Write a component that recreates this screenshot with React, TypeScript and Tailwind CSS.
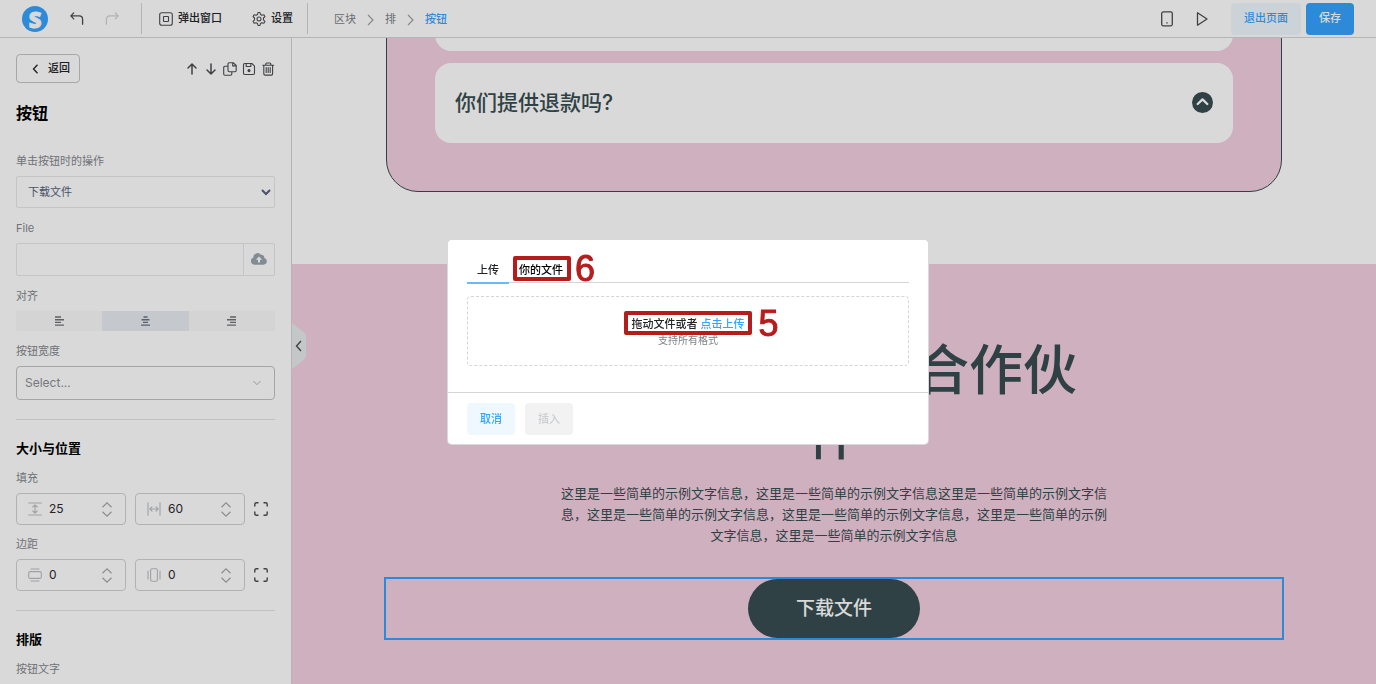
import React from 'react';
import { clsx } from 'clsx';

type IconProps = { className?: string; children: React.ReactNode; size?: number };

const Icon = ({ className, children, size = 14 }: IconProps) => (
  <svg
    width={size}
    height={size}
    viewBox={`0 0 ${size} ${size}`}
    fill="none"
    stroke="currentColor"
    strokeWidth={1.1}
    strokeLinecap="round"
    strokeLinejoin="round"
    className={clsx('shrink-0', className)}
    aria-hidden="true"
  >
    {children}
  </svg>
);

const ChevronRight = () => (
  <svg width="7" height="12" viewBox="0 0 7 12" fill="none" stroke="currentColor" strokeWidth="1.2" className="shrink-0 text-[#a0a2a5]">
    <path d="M1 1l5 5-5 5" />
  </svg>
);

const Header = () => (
  <header className="flex h-[38px] shrink-0 items-center border-b border-[#d4d5d6] bg-white text-[11px] font-medium text-[#222427]">
    <a href="#" className="ml-[22px] flex size-[26px] items-center justify-center rounded-full bg-[#36a3ff] font-['Open_Sans',sans-serif] text-[22px] leading-none font-extrabold text-white [-webkit-text-stroke:1px_white]">
      S
    </a>
    <button aria-label="撤销" className="ml-[22px] text-[#4b4d50]">
      <Icon><path strokeWidth="1.300" d="M3.700 0.900L0.900 3.900l2.800 3M0.900 3.900h8.300c2 0 3.400 1.500 3.400 3.500v4.800" /></Icon>
    </button>
    <button aria-label="重做" className="ml-[21px] text-[#d0d2d4]">
      <Icon><path strokeWidth="1.300" d="M10.300 0.900l2.800 3-2.800 3M13.100 3.900H4.800c-2 0-3.400 1.500-3.400 3.500v4.800" /></Icon>
    </button>
    <div className="ml-[22px] h-[31px] w-px bg-[#d4d5d6]" />
    <button className="ml-[17px] flex items-center gap-[5px]">
      <Icon className="text-[#4b4d50]">
        <rect x="0.700" y="0.700" width="12.600" height="12.600" rx="2" />
        <rect x="4.500" y="4.500" width="5" height="5" rx="0.500" />
      </Icon>
      弹出窗口
    </button>
    <button className="ml-[30px] flex items-center gap-[5px]">
      <svg width="14" height="14" viewBox="1.500 1.500 21 21" fill="none" stroke="currentColor" strokeWidth="1.600" strokeLinejoin="round" className="text-[#4b4d50]">
        <path d="M9.700 5.300L10.500 2.300h3l.8 3 2 1.100 3-.8 1.600 2.700-2.200 2.200v2.900l2.200 2.200-1.600 2.700-3-.8-2 1.200-.8 3h-3l-.8-3-2-1.200-3 .8-1.600-2.700 2.200-2.200v-2.900L3.100 8.300l1.600-2.700 3 .8z" />
        <circle cx="12" cy="12" r="3" />
      </svg>
      设置
    </button>
    <div className="ml-[14px] h-[31px] w-px bg-[#d4d5d6]" />
    <nav className="ml-[26px] flex items-center gap-[11px] pt-[2px] font-normal text-[#7d8085]">
      <a href="#">区块</a>
      <ChevronRight />
      <a href="#">排</a>
      <ChevronRight />
      <a href="#" className="font-medium text-[#36a3ff]">按钮</a>
    </nav>
    <div className="mr-[22px] ml-auto flex items-center">
      <button aria-label="手机" className="mr-[22px] text-[#4b4d50]">
        <svg width="12" height="16" viewBox="0 0 12 16" fill="none" stroke="currentColor" strokeWidth="1.300">
          <rect x="0.700" y="0.900" width="10.600" height="13.900" rx="1.500" />
          <path d="M5.300 11.800h1.400" />
        </svg>
      </button>
      <button aria-label="预览" className="mr-[22px] text-[#4b4d50]">
        <Icon><path strokeWidth="1.300" d="M2.500 0.800v12.400l9.500-6.200z" /></Icon>
      </button>
      <button className="h-8 rounded-[4px] bg-[#eff8ff] px-[13px] text-[#36a3ff]">退出页面</button>
      <button className="ml-[5px] h-8 rounded-[4px] bg-[#36a3ff] px-[13px] text-white">保存</button>
    </div>
  </header>
);

const Label = ({ htmlFor, children }: { htmlFor?: string; children: React.ReactNode }) => (
  <label htmlFor={htmlFor} className="mb-[7px] block text-[11px] leading-4 text-[#84878c]">
    {children}
  </label>
);

const NumberField = ({ id, value, label, children }: { id: string; value: string; label: string; children: React.ReactNode }) => (
  <div className="flex h-8 min-w-0 flex-1 items-center rounded-[4px] border border-[#d0d2d4] pr-3 pl-[11px]">
    <Icon className="text-[#bcbec1]">{children}</Icon>
    <input
      id={id}
      aria-label={label}
      defaultValue={value}
      className="ml-[7px] w-0 min-w-0 flex-1 text-[12px] text-[#2a2b2d] outline-none"
    />
    <div className="flex flex-col gap-[3px] text-[#a5a7aa]">
      <button aria-label="增加">
        <svg width="12" height="6" viewBox="0 0 12 6" fill="none" stroke="currentColor" strokeWidth="1.200" className="block"><path d="M1.500 5.300L6 0.900l4.500 4.400" /></svg>
      </button>
      <button aria-label="减少">
        <svg width="12" height="6" viewBox="0 0 12 6" fill="none" stroke="currentColor" strokeWidth="1.200" className="block"><path d="M1.500 0.700L6 5.100l4.500-4.400" /></svg>
      </button>
    </div>
  </div>
);

const ExpandButton = () => (
  <button aria-label="展开" className="flex w-[21px] items-center text-[#4b4d50]">
    <Icon>
      <path strokeWidth="1.400" d="M0.800 4V2.300c0-1 .5-1.500 1.500-1.500H4M10 0.800h1.700c1 0 1.500.5 1.500 1.500V4M13.200 10v1.700c0 1-.5 1.500-1.500 1.500H10M4 13.200H2.300c-1 0-1.500-.5-1.500-1.500V10" />
    </Icon>
  </button>
);

const alignments = [
  { name: '左对齐', d: 'M0 1h6M0 3.700h9M0 6.400h6M0 9.100h9' },
  { name: '居中', d: 'M2.500 1h4M0.500 3.700h8M2 6.400h5M0 9.100h9' },
  { name: '右对齐', d: 'M3 1h6M0 3.700h9M3 6.400h6M0 9.100h9' },
];

const Sidebar = () => (
  <aside className="w-[292px] shrink-0 overflow-hidden border-r border-[#d4d5d6] bg-white px-4 pt-4">
    <div className="flex h-[29px] items-center justify-between">
      <button className="flex h-full items-center gap-[9px] rounded-[4px] border border-[#c4c5c7] pr-[9px] pl-[15px] text-[11px] font-medium text-[#222427]">
        <svg width="7" height="10" viewBox="0 0 7 10" fill="none" stroke="currentColor" strokeWidth="1.300"><path d="M5.500 0.800L1.500 5l4 4.200" /></svg>
        返回
      </button>
      <div className="flex items-center gap-[5px] text-[#4b4d50]">
        <button aria-label="上移"><Icon><path strokeWidth="1.500" d="M7 12V2M3 6L7 2l4 4" /></Icon></button>
        <button aria-label="下移"><Icon><path strokeWidth="1.500" d="M7 2v10M3 8l4 4 4-4" /></Icon></button>
        <button aria-label="复制">
          <Icon>
            <path d="M6.200 0.700h4l3 2.800v5c0 .7-.5 1.200-1.200 1.200H6.200C5.500 9.700 5 9.200 5 8.500V1.900C5 1.200 5.500 0.700 6.200 0.700zM9.700 0.900v3h3.200M4.800 4.200H1.900c-.7 0-1.200.5-1.200 1.200v6.700c0 .7.5 1.200 1.200 1.200h5.700c.7 0 1.200-.5 1.200-1.200V10" />
          </Icon>
        </button>
        <button aria-label="保存区块">
          <Icon>
            <path d="M2.700 1.500h7.200l2.600 2.600v7.200c0 .7-.5 1.200-1.200 1.200H2.700c-.7 0-1.200-.5-1.200-1.200V2.700c0-.7.5-1.200 1.200-1.200zM4.200 1.700v2.800h4.600V1.700" />
            <circle cx="7" cy="8.600" r="1" fill="currentColor" />
          </Icon>
        </button>
        <button aria-label="删除">
          <Icon>
            <path d="M1.800 3.300h10.900M4.800 3.200V2c0-.7.4-1 1-1h3c.6 0 1 .3 1 1v1.200M2.800 3.500v8.300c0 .8.5 1.300 1.300 1.300h6.200c.8 0 1.300-.5 1.300-1.300V3.500M5.200 5.500v5M7.200 5.500v5M9.200 5.500v5" />
          </Icon>
        </button>
      </div>
    </div>

    <h1 className="mt-[18px] text-base font-bold text-black">按钮</h1>

    <div className="mt-7 flex flex-col gap-3">
      <div>
        <Label htmlFor="action">单击按钮时的操作</Label>
        <select id="action" className="h-8 w-full rounded-[2px] border border-[#e7e8e9] bg-white pl-[7px] text-[11px] text-[#55627a]">
          <option>下载文件</option>
        </select>
      </div>
      <div>
        <Label htmlFor="file">File</Label>
        <div className="flex h-[33px] rounded-[2px] border border-[#e7e8e9]">
          <input id="file" className="min-w-0 flex-1 px-2 text-[11px] outline-none" />
          <button aria-label="上传文件" className="flex w-[31px] items-center justify-center border-l border-[#e7e8e9] pb-[2px] text-[#98a6ae]">
            <svg width="16" height="12" viewBox="0 0 16 12" fill="currentColor">
              <path fillRule="evenodd" d="M3.600 11.700a3.600 3.600 0 0 1-1.300-7A4.300 4.300 0 0 1 10 1.800a2.700 2.700 0 0 1 3.200 3.200 3.400 3.400 0 0 1-.6 6.700zM8 3.600L4.900 6.800h2.100v2.800h2V6.800h2.100z" />
            </svg>
          </button>
        </div>
      </div>
      <div>
        <Label>对齐</Label>
        <div className="flex h-5 overflow-hidden rounded-[2px] bg-[#fafafa]">
          {alignments.map((item, index) => (
            <button
              key={item.name}
              aria-label={item.name}
              className={clsx('flex flex-1 items-center justify-center', index === 1 ? 'bg-[#e8edf1] text-[#687480]' : 'text-[#6f7276]')}
            >
              <svg width="9" height="10" viewBox="0 0 9 10" stroke="currentColor" strokeWidth="1.400"><path d={item.d} /></svg>
            </button>
          ))}
        </div>
      </div>
      <div>
        <Label htmlFor="width">按钮宽度</Label>
        <div className="relative">
          <select id="width" className="h-[34px] w-full appearance-none rounded-[4px] border border-[#c0c2c4] bg-white px-2 text-[12px] text-[#8b8e93]">
            <option>Select...</option>
          </select>
          <svg width="8" height="6" viewBox="0 0 8 6" fill="none" stroke="#b4b6b9" className="pointer-events-none absolute top-[14px] right-[14px]"><path d="M0.500 1L4 4.700 7.500 1" /></svg>
        </div>
      </div>
    </div>

    <hr className="mt-[19px] border-[#e2e3e4]" />
    <h2 className="mt-[18px] text-[13px] leading-5 font-bold text-black">大小与位置</h2>
    <div className="mt-3">
      <Label htmlFor="padding-y">填充</Label>
      <div className="flex gap-[9px]">
        <NumberField id="padding-y" label="垂直填充" value="25">
          <path d="M0.700 1h12.600M0.700 13h12.600M7 3.300v7.400M4.800 5L7 2.900 9.200 5M4.800 9L7 11.100 9.200 9" />
        </NumberField>
        <NumberField id="padding-x" label="水平填充" value="60">
          <path d="M1 0.700v12.600M13 0.700v12.600M3.300 7h7.400M5 4.800L2.900 7 5 9.200M9 4.800L11.100 7 9 9.200" />
        </NumberField>
        <ExpandButton />
      </div>
    </div>
    <div className="mt-[11px]">
      <Label htmlFor="margin-y">边距</Label>
      <div className="flex gap-[9px]">
        <NumberField id="margin-y" label="垂直边距" value="0">
          <path d="M3 1h8M3 13h8" />
          <rect x="0.700" y="3.600" width="12.600" height="6.800" rx="1.500" />
        </NumberField>
        <NumberField id="margin-x" label="水平边距" value="0">
          <path d="M1 3v8M13 3v8" />
          <rect x="3.600" y="0.700" width="6.800" height="12.600" rx="1.500" />
        </NumberField>
        <ExpandButton />
      </div>
    </div>

    <hr className="mt-[19px] border-[#e2e3e4]" />
    <h2 className="mt-[18px] text-[13px] leading-5 font-bold text-black">排版</h2>
    <div className="mt-3">
      <Label>按钮文字</Label>
    </div>
  </aside>
);

const Canvas = () => (
  <main className="relative min-w-0 flex-1 overflow-hidden bg-white text-[#384d50]">
    <section className="px-[94px] pb-[72px]">
      <div className="-mt-[116px] flex flex-col gap-3 rounded-[32px] border border-[#384d50] bg-[#f4cfe0] p-12">
        <div className="h-20 rounded-2xl bg-white" />
        <div className="flex h-20 items-center justify-between rounded-2xl bg-white px-5">
          <h3 className="text-[21px] font-medium">你们提供退款吗?</h3>
          <button aria-label="收起" className="pb-px">
            <svg width="21" height="21" viewBox="0 0 21 21" className="block">
              <circle cx="10.500" cy="10.500" r="10.500" fill="#384d50" />
              <path d="M5.700 12l4.800-4.600L15.300 12" fill="none" stroke="#fff" strokeWidth="2.400" strokeLinecap="round" strokeLinejoin="round" />
            </svg>
          </button>
        </div>
      </div>
    </section>
    <section className="flex flex-col items-center bg-[#f4cfe0] px-[92px] pt-[74px] pb-24 text-center">
      <h2 className="max-w-[530px] text-[54px] leading-[65px] font-medium">立即成为我们合作伙伴</h2>
      <p className="mt-[15px] max-w-[550px] text-[13px] leading-[21px]">
        这里是一些简单的示例文字信息，这里是一些简单的示例文字信息这里是一些简单的示例文字信息，这里是一些简单的示例文字信息，这里是一些简单的示例文字信息，这里是一些简单的示例文字信息，这里是一些简单的示例文字信息
      </p>
      <div className="mt-[31px] flex w-full justify-center border-2 border-[#36a3ff]">
        <a href="#" className="flex h-[59px] items-center rounded-full bg-[#384d50] px-12 pt-[2px] text-[19px] font-medium text-white">
          下载文件
        </a>
      </div>
    </section>
    <button aria-label="收起侧栏" className="absolute top-[285px] left-0 text-[#4b4d50]">
      <svg width="14" height="46" viewBox="0 0 14 46" fill="none" className="block">
        <path d="M0 0l11 8.500c2 1.600 3 3 3 5.500v18c0 2.500-1 3.900-3 5.500L0 46z" fill="#e6eaec" />
        <path d="M9 18l-4.500 5L9 28" stroke="currentColor" strokeWidth="1.400" />
      </svg>
    </button>
  </main>
);

const UploadDialog = () => (
  <div className="fixed inset-0 flex items-center justify-center bg-black/15">
    <div role="dialog" className="w-[480px] rounded-[4px] bg-white text-[11px] text-[#222427] shadow-[0_0_0_1px_#d8d9da]">
      <div className="px-[19px] pt-[18px] pb-[26px]">
        <div role="tablist" className="flex border-b border-[#d4d5d6] font-medium">
          <button role="tab" aria-selected="true" className="-mb-[2px] h-[26px] border-b-2 border-[#6db9f8] px-[10px]">上传</button>
          <button role="tab" aria-selected="false" className="relative px-[10px] text-black">
            你的文件
            <span className="absolute -top-[2px] right-[2px] bottom-px left-1 rounded-[2px] border-4 border-[#b71c1c]" />
            <span className="absolute -top-2 left-[66px] font-['Liberation_Sans',sans-serif] text-[36px] leading-[38px] font-normal text-[#b71c1c] [-webkit-text-stroke:1px_#b71c1c]">6</span>
          </button>
        </div>
        <div className="mt-[13px] flex h-[70px] flex-col items-center rounded-[4px] border border-dashed border-[#d4d5d6] pt-[18px]">
          <p className="relative leading-[18px] font-medium">
            拖动文件或者 <a href="#" className="text-[#36a3ff]">点击上传</a>
            <span className="absolute -inset-x-2 -top-1 -bottom-[2px] rounded-[2px] border-4 border-[#b71c1c]" />
            <span className="absolute -top-[10px] -right-[34px] font-['Liberation_Sans',sans-serif] text-[36px] leading-[38px] font-normal text-[#b71c1c] [-webkit-text-stroke:1px_#b71c1c]">5</span>
          </p>
          <p className="text-[10px] leading-[14px] text-[#7d8085]">支持所有格式</p>
        </div>
      </div>
      <div className="flex gap-[10px] border-t border-[#d4d5d6] px-[19px] pt-[10px] pb-[9px] font-medium">
        <button className="h-8 w-12 rounded-[4px] bg-[#eff8ff] text-[#36a3ff]">取消</button>
        <button disabled className="h-8 w-12 rounded-[4px] bg-[#f2f2f2] text-[#cccdd0]">插入</button>
      </div>
    </div>
  </div>
);

export default function App() {
  return (
    <div className="flex h-screen flex-col overflow-hidden font-['Inter','Noto_Sans_CJK_SC',sans-serif]">
      <Header />
      <div className="flex min-h-0 flex-1">
        <Sidebar />
        <Canvas />
      </div>
      <UploadDialog />
    </div>
  );
}
